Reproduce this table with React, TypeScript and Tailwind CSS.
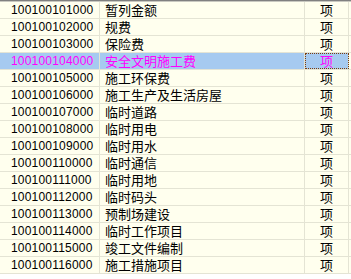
const rows: [string, string][] = [
  ["100100101000", "暂列金额"],
  ["100100102000", "规费"],
  ["100100103000", "保险费"],
  ["100100104000", "安全文明施工费"],
  ["100100105000", "施工环保费"],
  ["100100106000", "施工生产及生活房屋"],
  ["100100107000", "临时道路"],
  ["100100108000", "临时用电"],
  ["100100109000", "临时用水"],
  ["100100110000", "临时通信"],
  ["100100111000", "临时用地"],
  ["100100112000", "临时码头"],
  ["100100113000", "预制场建设"],
  ["100100114000", "临时工作项目"],
  ["100100115000", "竣工文件编制"],
  ["100100116000", "施工措施项目"],
];

const SELECTED = 3;

export default function App() {
  return (
    <div className="w-[351px] h-[279px] bg-white overflow-hidden">
      <div className="border-t border-[#808080]">
        <div className="border-t border-[#c8c8c0]">
          {rows.map(([code, name], i) => {
            const sel = i === SELECTED;
            const bg = sel ? "bg-[#a6caf0]" : "bg-[#ffffee]";
            return (
              <div
                key={code}
                className={`flex h-[17px] border-b border-[#e4e4d4] ${
                  sel ? "text-[#ff00ff]" : "text-black"
                }`}
              >
                <div
                  className={`w-[100px] shrink-0 pl-[11px] text-[12px] leading-[16px] tracking-[0.2px] border-r border-[#e4e4d4] ${bg}`}
                  style={{ fontFamily: '"Liberation Sans", Arial, sans-serif' }}
                >
                  {code}
                </div>
                <div
                  className={`w-[205px] shrink-0 pl-[5px] text-[13px] leading-[16px] border-r border-[#e4e4d4] ${bg}`}
                  style={{ fontFamily: '"Noto Sans CJK SC", sans-serif' }}
                >
                  {name}
                </div>
                <div
                  className={`w-[44px] shrink-0 text-center text-[13px] leading-[16px] border-r border-[#e4e4d4] ${bg} ${
                    sel ? "outline-1 outline-dotted outline-[#7a3e10] -outline-offset-1" : ""
                  }`}
                  style={{ fontFamily: '"Noto Sans CJK SC", sans-serif' }}
                >
                  项
                </div>
                <div className="flex-1 bg-[#ffffee]" />
              </div>
            );
          })}
        </div>
      </div>
    </div>
  );
}
